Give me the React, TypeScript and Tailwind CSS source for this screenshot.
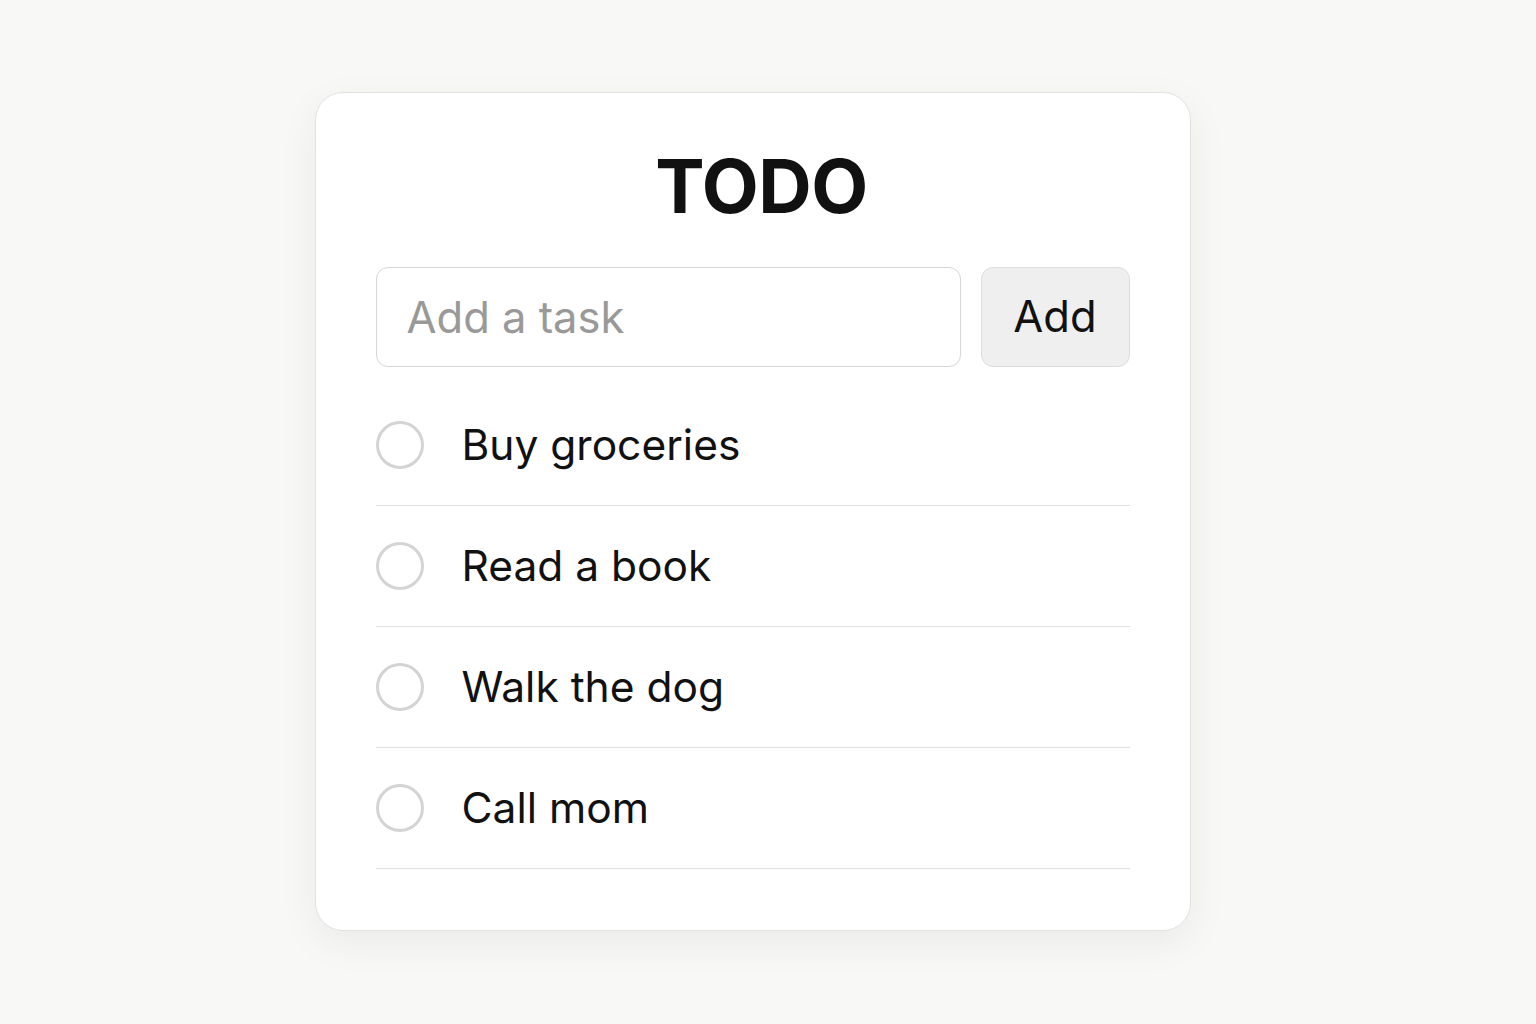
import React, { useState } from 'react';

const initialTasks = ['Buy groceries', 'Read a book', 'Walk the dog', 'Call mom'];

const App: React.FC = () => {
  const [tasks, setTasks] = useState<string[]>(initialTasks);
  const [value, setValue] = useState('');

  const addTask = () => {
    if (!value.trim()) return;
    setTasks([...tasks, value.trim()]);
    setValue('');
  };

  return (
    <div
      className="min-h-screen w-full bg-[#f8f8f7] flex justify-center pt-[92px] pr-[31px]"
      style={{ fontFamily: 'Inter, "Noto Sans", sans-serif' }}
    >
      <div className="w-[876px] h-fit bg-white rounded-[28px] border border-[#e2e2e2] shadow-[0_12px_40px_rgba(0,0,0,0.06)] px-[60px] pt-[56px] pb-[61px]">
        <h1 className="text-center text-[74px] leading-[74px] font-bold text-[#111] tracking-[-0.5px] pl-[18px]">
          TODO
        </h1>

        {/* Input row */}
        <div className="flex gap-[20px] mt-[44px]">
          <input
            value={value}
            onChange={e => setValue(e.target.value)}
            placeholder="Add a task"
            className="w-[585px] h-[100px] rounded-[12px] border border-[#d6d6d6] px-[30px] text-[43.5px] text-[#111] placeholder:text-[#999] outline-none"
          />
          <button
            onClick={addTask}
            className="flex-1 h-[100px] rounded-[12px] border border-[#dddddd] bg-[#efefef] text-[43.5px] text-[#111]"
          >
            Add
          </button>
        </div>

        {/* Task list */}
        <ul className="mt-[18px]">
          {tasks.map(task => (
            <li
              key={task}
              className="flex items-center h-[121px] border-b border-[#e0e0e0]"
            >
              <span className="w-[48px] h-[48px] rounded-full border-[3px] border-[#d4d4d4] shrink-0" />
              <span className="ml-[38px] text-[42.5px] text-[#111]">{task}</span>
            </li>
          ))}
        </ul>
      </div>
    </div>
  );
};

export default App;
